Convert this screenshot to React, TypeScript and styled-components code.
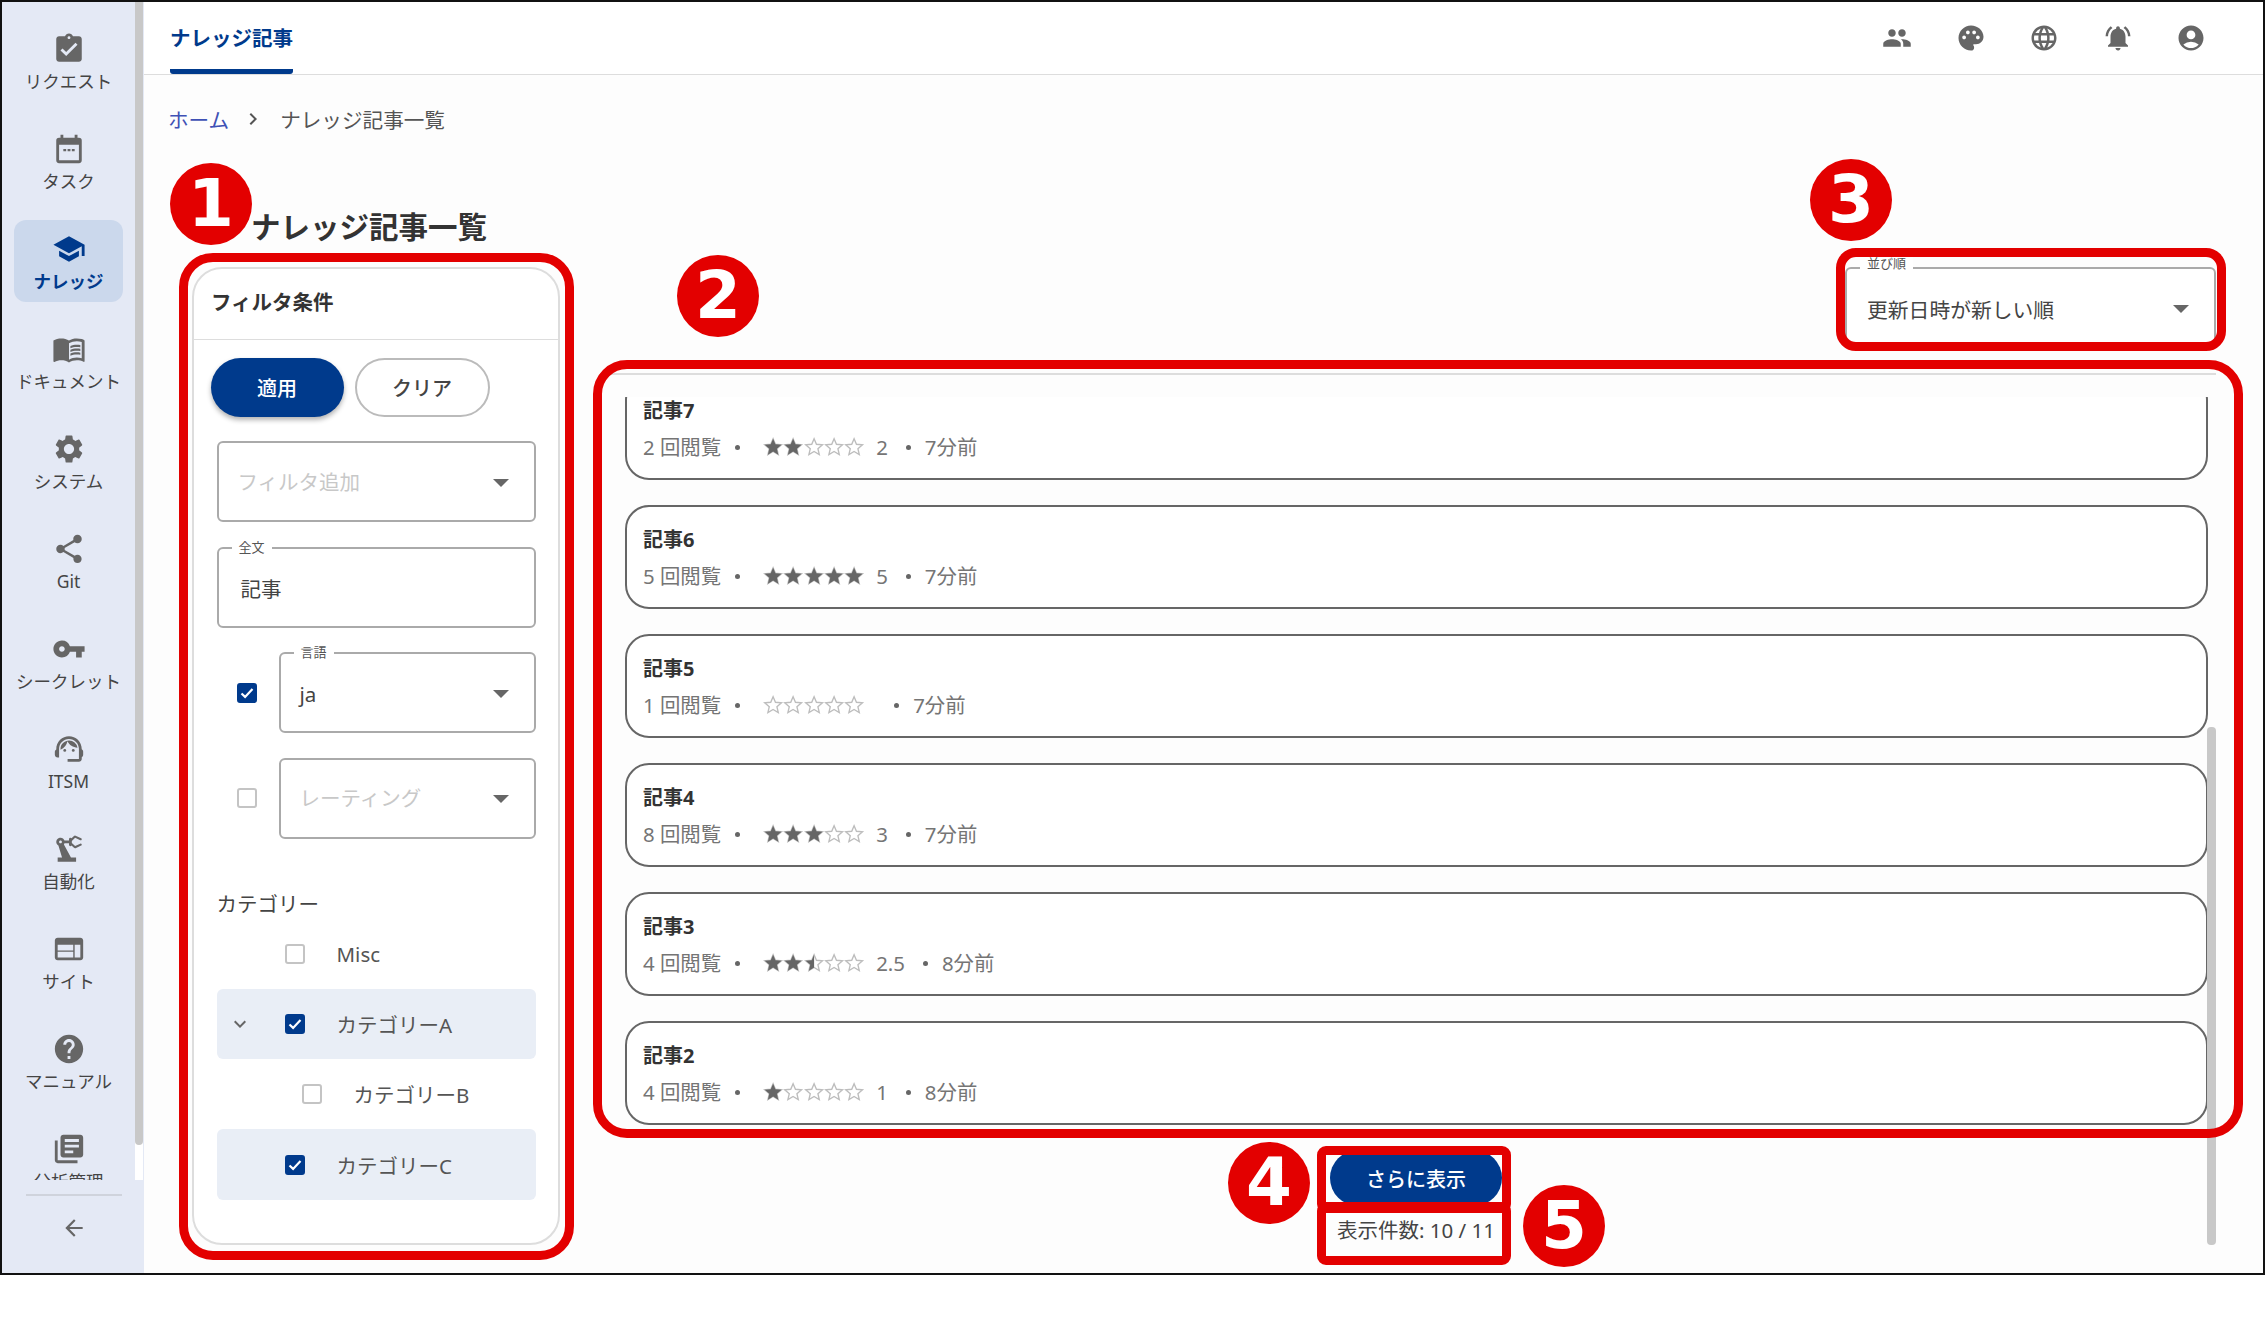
import React from "react";
import styled, { createGlobalStyle } from "styled-components";
import {
  MdAccountCircle,
  MdArrowBack,
  MdAssignmentTurnedIn,
  MdChevronRight,
  MdExpandMore,
  MdHelp,
  MdLanguage,
  MdLibraryBooks,
  MdMenuBook,
  MdNotificationsActive,
  MdPalette,
  MdPeople,
  MdPrecisionManufacturing,
  MdSchool,
  MdSettings,
  MdShare,
  MdSupportAgent,
  MdVpnKey,
  MdWeb,
} from "react-icons/md";

const NAVY = "#003a8c";
const RED = "#e30000";
const STAR_PATH =
  "M12 17.27L18.18 21l-1.64-7.03L22 9.24l-7.19-.61L12 2 9.19 8.63 2 9.24l5.46 4.73L5.82 21z";

const GlobalStyle = createGlobalStyle`
  html, body {
    margin: 0;
    padding: 0;
    background: #fff;
  }
  body {
    font-family: "Noto Sans", "Noto Sans CJK JP", sans-serif;
    color: #333;
  }
  * {
    box-sizing: border-box;
  }
`;

const TaskIcon = () => (
  <svg width="34" height="34" viewBox="0 0 24 24" fill="#666">
    <path d="M19 4h-1V2h-2v2H8V2H6v2H5a2 2 0 0 0-2 2v14a2 2 0 0 0 2 2h14a2 2 0 0 0 2-2V6a2 2 0 0 0-2-2zm0 16H5V9h14v11z" />
    <path d="M8 12h2v1.6H8zM11 12h2v1.6h-2zM14 12h2v1.6h-2z" />
  </svg>
);

const navItems = [
  { label: "リクエスト", icon: <MdAssignmentTurnedIn size={34} /> },
  { label: "タスク", icon: <TaskIcon /> },
  { label: "ナレッジ", icon: <MdSchool size={34} />, active: true },
  { label: "ドキュメント", icon: <MdMenuBook size={34} /> },
  { label: "システム", icon: <MdSettings size={34} /> },
  { label: "Git", icon: <MdShare size={34} /> },
  { label: "シークレット", icon: <MdVpnKey size={34} /> },
  { label: "ITSM", icon: <MdSupportAgent size={34} /> },
  { label: "自動化", icon: <MdPrecisionManufacturing size={34} /> },
  { label: "サイト", icon: <MdWeb size={34} /> },
  { label: "マニュアル", icon: <MdHelp size={34} /> },
  { label: "分析管理", icon: <MdLibraryBooks size={34} /> },
];

const articles = [
  { title: "記事7", views: 2, rating: 2, score: "2", time: "7分前" },
  { title: "記事6", views: 5, rating: 5, score: "5", time: "7分前" },
  { title: "記事5", views: 1, rating: 0, score: "", time: "7分前" },
  { title: "記事4", views: 8, rating: 3, score: "3", time: "7分前" },
  { title: "記事3", views: 4, rating: 2.5, score: "2.5", time: "8分前" },
  { title: "記事2", views: 4, rating: 1, score: "1", time: "8分前" },
];

const Star = ({ fill, id }: { fill: number; id: string }) => (
  <StarSvg viewBox="0 0 24 24">
    <path d={STAR_PATH} fill="#fff" stroke="#bdbdbd" strokeWidth="1.6" />
    {fill > 0 && (
      <>
        <clipPath id={id}>
          <rect x="0" y="0" width={24 * fill} height="24" />
        </clipPath>
        <path d={STAR_PATH} fill="#666" clipPath={`url(#${id})`} />
      </>
    )}
  </StarSvg>
);

const Stars = ({ rating, name }: { rating: number; name: string }) => (
  <StarRow>
    {[0, 1, 2, 3, 4].map((i) => (
      <Star
        key={i}
        id={`${name}-${i}`}
        fill={Math.max(0, Math.min(1, rating - i))}
      />
    ))}
  </StarRow>
);

const App = () => {
  return (
    <>
      <GlobalStyle />
      <Screen>
        <Sidebar>
          <NavScroll>
            <NavList>
              {navItems.map((item) => (
                <NavItem key={item.label} $active={!!item.active}>
                  {item.icon}
                  <NavLabel $active={!!item.active}>{item.label}</NavLabel>
                </NavItem>
              ))}
            </NavList>
            <ScrollTrack>
              <ScrollThumb />
            </ScrollTrack>
          </NavScroll>
          <SidebarFooter>
            <MdArrowBack size={26} />
          </SidebarFooter>
        </Sidebar>

        <Main>
          <TopBar>
            <Tab>ナレッジ記事</Tab>
            <TopIcons>
              <MdPeople size={30} />
              <MdPalette size={30} />
              <MdLanguage size={30} />
              <MdNotificationsActive size={30} />
              <MdAccountCircle size={30} />
            </TopIcons>
          </TopBar>

          <Content>
            <Breadcrumb>
              <CrumbLink>ホーム</CrumbLink>
              <MdChevronRight size={24} />
              <span>ナレッジ記事一覧</span>
            </Breadcrumb>
            <PageTitle>ナレッジ記事一覧</PageTitle>

            <Columns>
              <FilterCard>
                <FilterHeader>フィルタ条件</FilterHeader>
                <FilterBody>
                  <ButtonRow>
                    <PrimaryPill>適用</PrimaryPill>
                    <OutlinePill>クリア</OutlinePill>
                  </ButtonRow>
                  <FieldStack>
                    <Field>
                      <FieldValue $muted>フィルタ追加</FieldValue>
                      <Caret />
                    </Field>
                    <Field>
                      <Notch>全文</Notch>
                      <FieldValue $indent={3}>記事</FieldValue>
                    </Field>
                    <CheckField>
                      <Check $checked />
                      <Field>
                        <Notch>言語</Notch>
                        <FieldValue>ja</FieldValue>
                        <Caret />
                      </Field>
                    </CheckField>
                    <CheckField>
                      <Check />
                      <Field>
                        <FieldValue $muted>レーティング</FieldValue>
                        <Caret />
                      </Field>
                    </CheckField>
                  </FieldStack>

                  <TreeTitle>カテゴリー</TreeTitle>
                  <TreeRow>
                    <ChevronSlot />
                    <Check />
                    <TreeLabel>Misc</TreeLabel>
                  </TreeRow>
                  <TreeRow $selected>
                    <ChevronSlot>
                      <MdExpandMore size={24} />
                    </ChevronSlot>
                    <Check $checked />
                    <TreeLabel>カテゴリーA</TreeLabel>
                  </TreeRow>
                  <TreeRow $depth={1}>
                    <ChevronSlot />
                    <Check />
                    <TreeLabel>カテゴリーB</TreeLabel>
                  </TreeRow>
                  <TreeRow $selected>
                    <ChevronSlot />
                    <Check $checked />
                    <TreeLabel>カテゴリーC</TreeLabel>
                  </TreeRow>
                </FilterBody>
              </FilterCard>

              <Results>
                <SortSelect>
                  <SortLabel>並び順</SortLabel>
                  <SortValue>更新日時が新しい順</SortValue>
                  <Caret />
                </SortSelect>
                <ResultsScroll>
                  <ArticleList>
                    {articles.map((article) => (
                      <ArticleCard key={article.title}>
                        <ArticleTitle>{article.title}</ArticleTitle>
                        <ArticleMeta>
                          <span>{article.views} 回閲覧</span>
                          <ViewsDot />
                          <Stars
                            rating={article.rating}
                            name={article.title}
                          />
                          <Score>{article.score}</Score>
                          <MetaDot />
                          <span>{article.time}</span>
                        </ArticleMeta>
                      </ArticleCard>
                    ))}
                  </ArticleList>
                  <MoreArea>
                    <MoreButton>さらに表示</MoreButton>
                    <CountText>表示件数: 10 / 11</CountText>
                  </MoreArea>
                  <ListThumb />
                </ResultsScroll>
              </Results>
            </Columns>
          </Content>
        </Main>

        <Callout $x={179} $y={253} $w={395} $h={1007} $r={34} />
        <Callout $x={593} $y={360} $w={1650} $h={778} $r={34} />
        <Callout $x={1836} $y={248} $w={390} $h={103} $r={20} />
        <Callout $x={1317} $y={1146} $w={194} $h={67} $r={9} />
        <Callout $x={1317} $y={1202} $w={194} $h={63} $r={9} />
        <Badge $x={211} $y={204}>1</Badge>
        <Badge $x={718} $y={296}>2</Badge>
        <Badge $x={1851} $y={200}>3</Badge>
        <Badge $x={1269} $y={1183}>4</Badge>
        <Badge $x={1564} $y={1226}>5</Badge>
      </Screen>
    </>
  );
};

const Screen = styled.div`
  position: relative;
  display: flex;
  width: 2265px;
  height: 1275px;
  border: 2px solid #111;
  background: #fdfdfd;
  overflow: hidden;
`;

const Sidebar = styled.aside`
  display: flex;
  flex-direction: column;
  flex: 0 0 142px;
  background: #e4e9f5;
`;

const NavScroll = styled.div`
  display: flex;
  height: 1178px;
`;

const NavList = styled.nav`
  display: flex;
  flex-direction: column;
  gap: 18px;
  flex: 0 0 133px;
  padding: 18px 12px 0;
  overflow: hidden;
`;

const NavItem = styled.div<{ $active?: boolean }>`
  display: flex;
  flex-direction: column;
  align-items: center;
  flex: 0 0 82px;
  padding-top: 12px;
  border-radius: 12px;
  background: ${({ $active }) => ($active ? "#cbd8ec" : "transparent")};
  color: ${({ $active }) => ($active ? NAVY : "#666")};
  svg {
    flex: 0 0 34px;
  }
`;

const NavLabel = styled.span<{ $active?: boolean }>`
  margin-top: 3px;
  font-size: 17.5px;
  font-weight: ${({ $active }) => ($active ? 700 : 400)};
  line-height: 24px;
  white-space: nowrap;
  color: ${({ $active }) => ($active ? NAVY : "#444")};
`;

const ScrollTrack = styled.div`
  flex: 0 0 8px;
  background: #fff;
`;

const ScrollThumb = styled.div`
  height: 1143px;
  border-radius: 0 0 4px 4px;
  background: #c8c8c8;
`;

const SidebarFooter = styled.div`
  display: flex;
  justify-content: center;
  align-items: center;
  height: 66px;
  margin: 14px 22px 0 24px;
  border-top: 2px solid #cfd3dc;
  color: #666;
`;

const Main = styled.main`
  display: flex;
  flex-direction: column;
  flex: 1;
  min-width: 0;
`;

const TopBar = styled.header`
  display: flex;
  justify-content: space-between;
  flex: 0 0 73px;
  padding: 0 57px 0 26px;
  border-bottom: 1.5px solid #ddd;
  background: #fff;
`;

const Tab = styled.div`
  display: flex;
  align-items: center;
  height: 72px;
  padding-top: 2px;
  border-bottom: 5px solid ${NAVY};
  border-radius: 0 0 3px 3px;
  font-size: 20.5px;
  font-weight: 700;
  color: ${NAVY};
`;

const TopIcons = styled.div`
  display: flex;
  align-items: center;
  gap: 43.5px;
  color: #666;
`;

const Content = styled.div`
  display: flex;
  flex-direction: column;
  padding: 29px 0 0 24px;
`;

const Breadcrumb = styled.div`
  display: flex;
  align-items: center;
  height: 30px;
  font-size: 20.6px;
  color: #555;
  svg {
    margin: 0 15px 0 12px;
  }
`;

const CrumbLink = styled.span`
  color: #3f51b5;
`;

const PageTitle = styled.h1`
  margin: 71px 0 18px 83px;
  font-size: 29.5px;
  line-height: 44px;
  font-weight: 700;
  color: #333;
`;

const Columns = styled.div`
  display: flex;
  gap: 40px;
  margin-left: 24px;
`;

const FilterCard = styled.section`
  flex: 0 0 368px;
  height: 978px;
  border: 2px solid #ddd;
  border-radius: 30px;
  background: #fff;
`;

const FilterHeader = styled.h2`
  display: flex;
  align-items: center;
  height: 71px;
  margin: 0;
  padding: 0 0 7px 17px;
  border-bottom: 1.5px solid #ddd;
  font-size: 20.5px;
  font-weight: 700;
  color: #333;
`;

const FilterBody = styled.div`
  padding: 18px 22px 0 22.5px;
`;

const ButtonRow = styled.div`
  display: flex;
  gap: 11px;
  margin-left: -6px;
`;

const Pill = styled.button`
  height: 59px;
  border-radius: 30px;
  font-family: inherit;
  font-size: 20px;
  font-weight: 500;
`;

const PrimaryPill = styled(Pill)`
  width: 133px;
  border: none;
  background: ${NAVY};
  color: #fff;
  box-shadow: 0 3px 5px rgba(0, 0, 0, 0.3);
`;

const OutlinePill = styled(Pill)`
  width: 135px;
  border: 2px solid #bbb;
  background: #fff;
  color: #444;
`;

const FieldStack = styled.div`
  display: flex;
  flex-direction: column;
  gap: 24.5px;
  margin-top: 24px;
`;

const Field = styled.div`
  position: relative;
  display: flex;
  justify-content: space-between;
  align-items: center;
  flex: 1 0 auto;
  height: 81px;
  padding: 0 25px 0 19px;
  border: 2px solid #aaa;
  border-radius: 6px;
  background: #fff;
`;

const FieldValue = styled.span<{ $muted?: boolean; $indent?: number }>`
  margin-left: ${({ $indent }) => $indent ?? 0}px;
  padding: ${({ $muted }) => ($muted ? "0 0 2px" : "2px 0 0")};
  font-size: 20.5px;
  white-space: nowrap;
  color: ${({ $muted }) => ($muted ? "#c8c8c8" : "#444")};
`;

const Caret = styled.span`
  margin-top: 2px;
  border-top: 8px solid #666;
  border-left: 8px solid transparent;
  border-right: 8px solid transparent;
`;

const Notch = styled.span`
  position: absolute;
  top: -11px;
  left: 13px;
  padding: 0 7px;
  font-size: 13px;
  line-height: 18px;
  background: #fff;
  color: #555;
`;

const CheckField = styled.div`
  display: flex;
  align-items: center;
  gap: 22px;
  padding-left: 20px;
`;

const Check = styled.span.attrs<{ $checked?: boolean }>(({ $checked }) => ({
  children: $checked ? (
    <svg width="14" height="14" viewBox="0 0 14 14">
      <path
        d="M1.5 7.5l3.6 3.4L12.5 3"
        fill="none"
        stroke="#fff"
        strokeWidth="2.2"
      />
    </svg>
  ) : null,
}))<{ $checked?: boolean }>`
  display: flex;
  justify-content: center;
  align-items: center;
  flex: 0 0 20px;
  height: 20px;
  border: 2.5px solid ${({ $checked }) => ($checked ? NAVY : "#c4c4c4")};
  border-radius: 3px;
  background: ${({ $checked }) => ($checked ? NAVY : "#fff")};
`;

const TreeTitle = styled.div`
  margin-top: 50px;
  font-size: 20.5px;
  line-height: 30px;
  color: #444;
`;

const TreeRow = styled.div<{ $selected?: boolean; $depth?: number }>`
  display: flex;
  align-items: center;
  height: 70.3px;
  padding-left: ${({ $depth }) => 11 + ($depth ?? 0) * 17}px;
  border-radius: 6px;
  background: ${({ $selected }) => ($selected ? "#e9eef6" : "transparent")};
`;

const ChevronSlot = styled.span`
  display: flex;
  flex: 0 0 24px;
  margin-right: 33px;
  color: #666;
`;

const TreeLabel = styled.span`
  margin-left: 32px;
  font-size: 20.5px;
  color: #555;
`;

const Results = styled.div`
  display: flex;
  flex-direction: column;
  align-items: flex-end;
  flex: 0 0 1616px;
`;

const SortSelect = styled(Field)`
  flex: 0 0 81px;
  width: 371px;
  padding-left: 20px;
`;

const SortValue = styled(FieldValue)`
  font-size: 20.8px;
`;

const SortLabel = styled(Notch)`
  top: -15px;
  left: 13px;
`;

const ResultsScroll = styled.div`
  position: relative;
  width: 100%;
  height: 872px;
  margin-top: 25px;
  padding-left: 25px;
  border-top: 2px solid #ddd;
`;

const ArticleList = styled.div`
  display: flex;
  flex-direction: column;
  gap: 25px;
  width: 1583px;
  height: 730px;
  margin-top: 22px;
  overflow: hidden;
`;

const ArticleCard = styled.article`
  flex: 0 0 104px;
  padding: 19px 0 0 16px;
  border: 2px solid #666;
  border-radius: 24px;
  background: #fff;
  &:first-child {
    margin-top: -21px;
  }
`;

const ArticleTitle = styled.div`
  font-size: 20px;
  font-weight: 700;
  line-height: 28px;
  color: #333;
`;

const ArticleMeta = styled.div`
  display: flex;
  align-items: center;
  margin-top: 8px;
  font-size: 20.4px;
  line-height: 28px;
  color: #757575;
`;

const Dot = styled.span`
  flex: 0 0 5px;
  height: 5px;
  border-radius: 50%;
  background: #666;
`;

const ViewsDot = styled(Dot)`
  margin: 0 23px 0 14px;
`;

const MetaDot = styled(Dot)`
  margin: 0 14px 0 18px;
`;

const StarRow = styled.div`
  display: flex;
  width: 101px;
`;

const StarSvg = styled.svg`
  flex: 0 0 20.2px;
  width: 20.2px;
  height: 20.2px;
  overflow: visible;
`;

const Score = styled.span`
  margin-left: 12px;
`;

const MoreArea = styled.div`
  display: flex;
  flex-direction: column;
  align-items: center;
  width: 1582px;
  margin-top: 23px;
`;

const MoreButton = styled.button`
  width: 172px;
  height: 56px;
  border: none;
  border-radius: 28px;
  background: ${NAVY};
  font-family: inherit;
  font-size: 20px;
  font-weight: 500;
  color: #fff;
`;

const CountText = styled.div`
  margin-top: 9px;
  font-size: 20.5px;
  line-height: 30px;
  white-space: nowrap;
  color: #444;
`;

const ListThumb = styled.div`
  position: absolute;
  top: 352px;
  right: 0;
  bottom: 0;
  width: 9px;
  border-radius: 4px;
  background: #c8c8c8;
`;

const Callout = styled.div<{
  $x: number;
  $y: number;
  $w: number;
  $h: number;
  $r: number;
}>`
  position: absolute;
  left: ${({ $x }) => $x - 2}px;
  top: ${({ $y }) => $y - 2}px;
  width: ${({ $w }) => $w}px;
  height: ${({ $h }) => $h}px;
  border: 9px solid ${RED};
  border-radius: ${({ $r }) => $r}px;
  pointer-events: none;
`;

const Badge = styled.div<{ $x: number; $y: number }>`
  position: absolute;
  left: ${({ $x }) => $x - 43}px;
  top: ${({ $y }) => $y - 43}px;
  display: flex;
  justify-content: center;
  align-items: center;
  width: 82px;
  height: 82px;
  border-radius: 50%;
  background: ${RED};
  font-family: "DejaVu Sans", sans-serif;
  font-size: 66px;
  font-weight: 700;
  line-height: 1;
  color: #fff;
`;

export default App;
